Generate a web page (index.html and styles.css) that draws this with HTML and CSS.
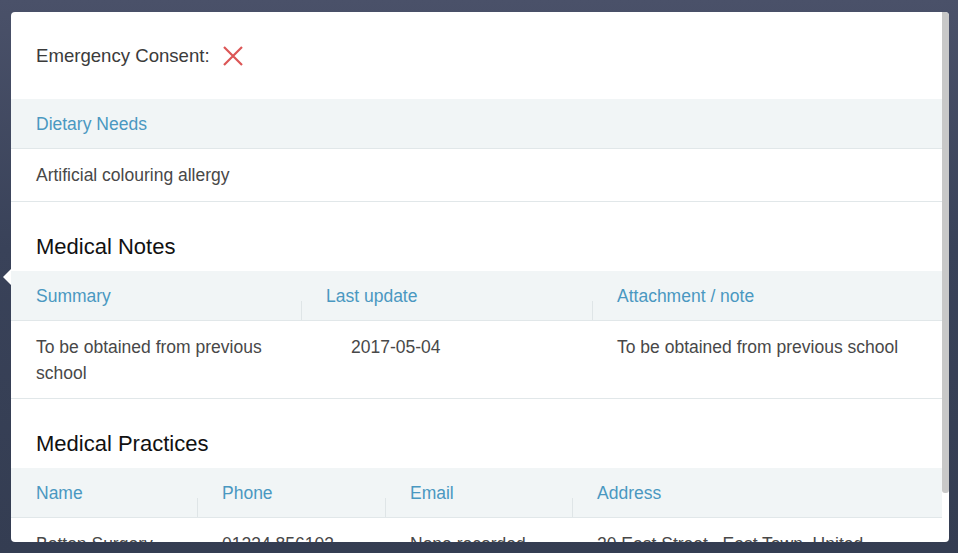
FILE: index.html
```html
<!DOCTYPE html>
<html lang="en">
<head>
  <meta charset="UTF-8">
  <meta name="viewport" content="width=device-width, initial-scale=1.0">
  <title>Pupil details</title>
  <link rel="stylesheet" href="styles.css">
</head>
<body>
  <div class="modal">
    <span class="pointer"></span>
    <div class="modal-body">
      <div class="consent">
        <span>Emergency Consent:</span>
        <svg class="cross" width="20" height="20" viewBox="0 0 20 20">
          <path d="M1 1 L19 19 M19 1 L1 19" stroke="#dc5656" stroke-width="2.2" fill="none"/>
        </svg>
      </div>

      <div class="band">Dietary Needs</div>
      <div class="row">Artificial colouring allergy</div>

      <h2 class="section-title">Medical Notes</h2>
      <div class="grid notes">
        <div class="th">Summary</div>
        <div class="th sep">Last update</div>
        <div class="th sep">Attachment / note</div>
        <div class="td">To be obtained from previous school</div>
        <div class="td date">2017-05-04</div>
        <div class="td">To be obtained from previous school</div>
      </div>

      <h2 class="section-title">Medical Practices</h2>
      <div class="grid practices">
        <div class="th">Name</div>
        <div class="th sep">Phone</div>
        <div class="th sep">Email</div>
        <div class="th sep">Address</div>
        <div class="td">Botton Surgery</div>
        <div class="td">01234 856103</div>
        <div class="td">None recorded</div>
        <div class="td">20 East Street , East Town, United Kingdom</div>
      </div>
    </div>
    <div class="scrollbar"><div class="thumb"></div></div>
  </div>
</body>
</html>
```

FILE: styles.css
```css
html, body {
  height: 100%;
}
body {
  margin: 0;
  padding: 12px 9px 11px 11px;
  box-sizing: border-box;
  background: linear-gradient(#4a5169, #394259 45%, #343d52);
  font-family: "Liberation Sans", Arial, sans-serif;
  font-size: 17.5px;
  line-height: 26px;
  color: #484848;
}
.modal {
  position: relative;
  display: flex;
  width: 938px;
  height: 530px;
  background-color: white;
  border-radius: 4px;
}
.pointer {
  position: absolute;
  left: -8px;
  top: 257px;
  width: 0;
  height: 0;
  border-top: 8px solid transparent;
  border-bottom: 8px solid transparent;
  border-right: 8px solid white;
}
.modal-body {
  flex: 1;
  overflow: hidden;
  border-radius: 4px 0 0 4px;
}
.scrollbar {
  width: 7px;
  border-radius: 0 4px 4px 0;
  overflow: hidden;
}
.thumb {
  height: 481px;
  background-color: #c8c8c8;
  border-radius: 0 0 3px 3px;
}
.consent {
  display: flex;
  align-items: center;
  gap: 13px;
  padding: 31px 25px 30px;
  font-size: 18.6px;
  color: #3b3b3b;
}
.cross {
  display: block;
}
.band,
.th {
  background-color: #f1f5f6;
  color: #4a98c1;
  padding: 12px 25px 11px;
  border-bottom: 1px solid #e1e7e9;
}
.row {
  padding: 13px 25px;
  border-bottom: 1px solid #e1e7e9;
}
.td {
  padding: 13px 25px 12px;
  border-bottom: 1px solid #e1e7e9;
}
.section-title {
  margin: 0;
  padding: 32px 25px 11px;
  font-size: 22px;
  font-weight: normal;
  line-height: 26px;
  color: #111;
}
.grid {
  display: grid;
}
.notes {
  grid-template-columns: 290px 291px 1fr;
}
.practices {
  grid-template-columns: 186px 188px 187px 1fr;
}
.th {
  position: relative;
}
.sep::before {
  content: "";
  position: absolute;
  left: 0;
  bottom: 0;
  width: 1px;
  height: 19px;
  background-color: #dfe5e7;
}
.notes .td:first-of-type {
  padding-right: 30px;
}
.date {
  padding-left: 50px;
}
```
